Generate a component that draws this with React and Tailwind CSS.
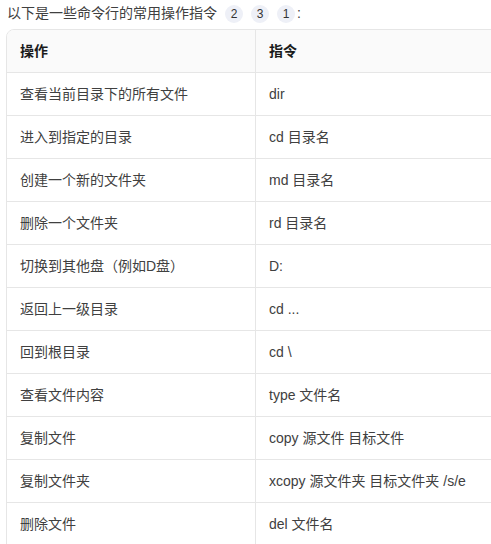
import React from 'react';

const rows = [
  ['查看当前目录下的所有文件', 'dir'],
  ['进入到指定的目录', 'cd 目录名'],
  ['创建一个新的文件夹', 'md 目录名'],
  ['删除一个文件夹', 'rd 目录名'],
  ['切换到其他盘（例如D盘）', 'D:'],
  ['返回上一级目录', 'cd ...'],
  ['回到根目录', 'cd \\'],
  ['查看文件内容', 'type 文件名'],
  ['复制文件', 'copy 源文件 目标文件'],
  ['复制文件夹', 'xcopy 源文件夹 目标文件夹 /s/e'],
  ['删除文件', 'del 文件名'],
];

const Badge = ({ n }) => (
  <span className="inline-flex items-center justify-center w-[18px] h-[18px] rounded-full bg-[#eef0f7] text-[12px] text-[#333] ml-[8px]">
    {n}
  </span>
);

const App = () => {
  return (
    <div className="w-[491px] h-[544px] overflow-hidden bg-white font-['Liberation_Sans','Noto_Sans_CJK_SC',sans-serif] text-[14px] text-[#404040]">
      <div className="flex items-center h-[26px] pl-[7px] pt-[1px]">
        <span>以下是一些命令行的常用操作指令</span>
        <Badge n="2" />
        <Badge n="3" />
        <Badge n="1" />
        <span className="ml-[2px]">:</span>
      </div>
      <div className="ml-[6px] mt-[3px] w-[540px] border border-[#e6e6e6] rounded-tl-[8px] overflow-hidden">
        <div className="flex h-[43px] bg-[#fafafa] font-bold text-[#1a1a1a] border-b border-[#e6e6e6]">
          <div className="w-[249px] flex items-center pl-[13px] border-r border-[#e6e6e6]">操作</div>
          <div className="flex-1 flex items-center pl-[13px]">指令</div>
        </div>
        {rows.map(([a, b], i) => (
          <div key={i} className="flex h-[43px] border-b border-[#e6e6e6]">
            <div className="w-[249px] flex items-center pl-[13px] border-r border-[#e6e6e6]">{a}</div>
            <div className="flex-1 flex items-center pl-[13px]">{b}</div>
          </div>
        ))}
      </div>
    </div>
  );
};

export default App;
